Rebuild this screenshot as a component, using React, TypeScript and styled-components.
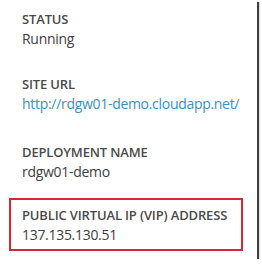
import React from "react";
import styled, { createGlobalStyle } from "styled-components";

const Global = createGlobalStyle`
  html, body { margin: 0; padding: 0; background: #ffffff; }
  body { font-family: "Open Sans", "Noto Sans", sans-serif; }
`;

const Panel = styled.div`
  width: 257px;
  height: 259px;
  box-sizing: border-box;
  background: #ffffff;
  box-shadow: 2px 2px 1px rgba(0, 0, 0, 0.75);
  padding: 9px 0 0 9px;
  display: flex;
  flex-direction: column;
`;

const Section = styled.div<{ $top: number; $highlight?: boolean }>`
  margin-top: ${(p) => p.$top}px;
  width: 234px;
  box-sizing: border-box;
  border: 2px solid ${(p) => (p.$highlight ? "#d3283a" : "transparent")};
  padding: ${(p) => (p.$highlight ? "7px 0 5px 11px" : "0 0 0 11px")};
  display: flex;
  flex-direction: column;
`;

const Label = styled.div`
  font-size: 13px;
  font-weight: 600;
  line-height: 16px;
  color: #4a4a4a;
  letter-spacing: -0.15px;
`;

const Value = styled.div<{ $link?: boolean }>`
  margin-top: 3px;
  font-size: 14px;
  line-height: 18px;
  color: ${(p) => (p.$link ? "#3a8fc4" : "#404040")};
  white-space: nowrap;
  letter-spacing: -0.3px;
`;

export default function App() {
  return (
    <>
      <Global />
      <Panel>
        <Section $top={0}>
          <Label>STATUS</Label>
          <Value>Running</Value>
        </Section>
        <Section $top={24}>
          <Label>SITE URL</Label>
          <Value $link>http://rdgw01-demo.cloudapp.net/</Value>
        </Section>
        <Section $top={27}>
          <Label>DEPLOYMENT NAME</Label>
          <Value>rdgw01-demo</Value>
        </Section>
        <Section $top={15} $highlight>
          <Label>PUBLIC VIRTUAL IP (VIP) ADDRESS</Label>
          <Value>137.135.130.51</Value>
        </Section>
      </Panel>
    </>
  );
}
